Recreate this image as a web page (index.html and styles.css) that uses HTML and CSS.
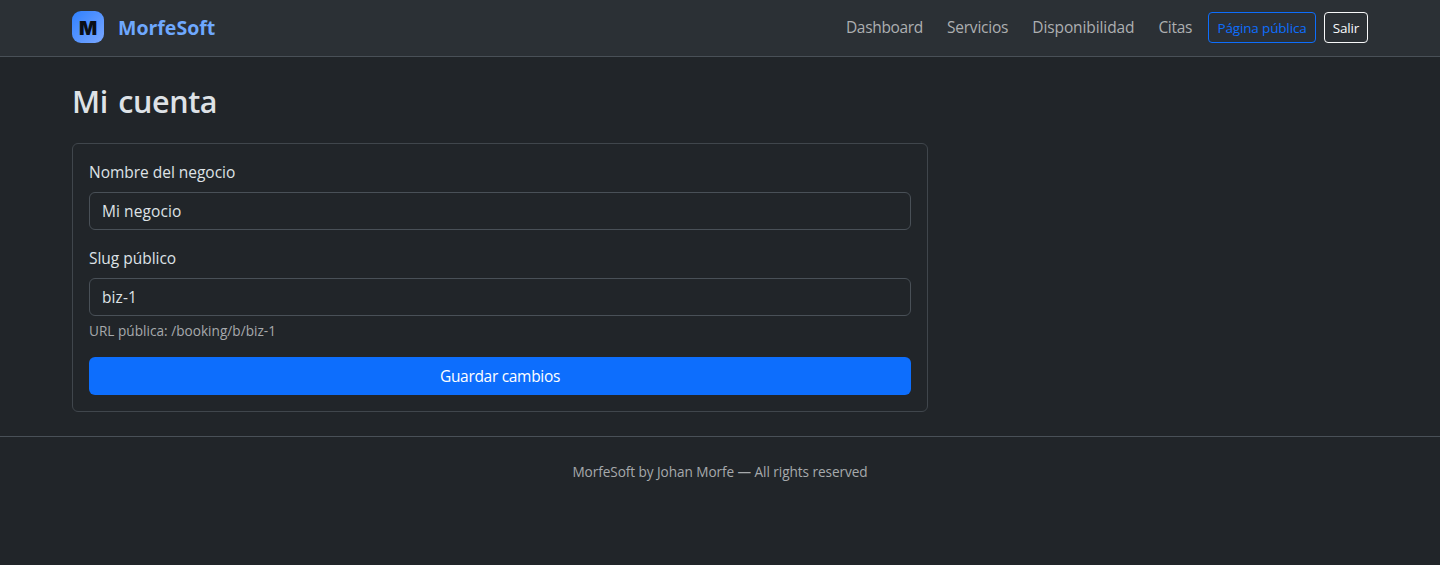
FILE: index.html
```html
<!DOCTYPE html>
<html lang="es">
<head>
<meta charset="utf-8">
<title>Mi cuenta</title>
<link rel="stylesheet" href="styles.css">
</head>
<body>
<header class="navbar">
  <div class="container navbar-inner">
    <a class="brand" href="#">
      <svg class="logo" width="32" height="32" viewBox="0 0 32 32">
        <defs><linearGradient id="g" x1="0" y1="0" x2="1" y2="1"><stop offset="0" stop-color="#2f80ff"/><stop offset="1" stop-color="#7aa7ff"/></linearGradient></defs>
        <rect width="32" height="32" rx="9" fill="url(#g)"/>
        <text class="logo-letter" x="16" y="24" text-anchor="middle">M</text>
      </svg>
      <span class="brand-name">MorfeSoft</span>
    </a>
    <nav class="nav">
      <a class="nav-link" href="#">Dashboard</a>
      <a class="nav-link nav-link-services" href="#">Servicios</a>
      <a class="nav-link nav-link-availability" href="#">Disponibilidad</a>
      <a class="nav-link" href="#">Citas</a>
      <a class="btn-sm btn-public" href="#">Página pública</a>
      <a class="btn-sm btn-exit" href="#">Salir</a>
    </nav>
  </div>
</header>
<main class="container main">
  <h1 class="title">Mi cuenta</h1>
  <form class="card">
    <label class="label" for="name">Nombre del negocio</label>
    <input class="input" id="name" value="Mi negocio">
    <label class="label label-next" for="slug">Slug público</label>
    <input class="input" id="slug" value="biz-1">
    <div class="help">URL pública: /booking/b/biz-1</div>
    <button class="submit" type="button">Guardar cambios</button>
  </form>
</main>
<footer class="footer">MorfeSoft by Johan Morfe — All rights reserved</footer>
</body>
</html>
```
FILE: styles.css
```css
* { box-sizing: border-box; }
body {
  margin: 0;
  background: #212529;
  color: #dee2e6;
  font: 15.5px/24px "Open Sans", "Noto Sans", sans-serif;
}
a { text-decoration: none; color: inherit; }
.container { width: 1296px; margin: 0 auto; }
.navbar { height: 57px; background: #2b3035; border-bottom: 1px solid #495057; }
.navbar-inner { display: flex; justify-content: space-between; align-items: center; height: 55px; }
.brand { display: flex; align-items: center; gap: 14px; height: 32px; margin-bottom: 1px; }
.logo { display: block; }
.logo-letter { font: 900 19px Inter, sans-serif; fill: #0b0f17; }
.brand-name { padding-top: 2px; font-size: 19.5px; font-weight: 700; line-height: 30px; color: #6ea8fe; letter-spacing: 0; }
.nav { display: flex; align-items: center; gap: 8px; }
.nav-link { margin-bottom: 2px; padding: 0 8px; color: #adafb1; letter-spacing: -0.33px; }
.nav-link-services { letter-spacing: -0.22px; }
.nav-link-availability { letter-spacing: -0.1px; }
.btn-sm { height: 31px; padding: 4px 8px; border: 1px solid; border-radius: 4px; font-size: 13.5px; line-height: 22px; letter-spacing: -0.15px; text-align: center; white-space: nowrap; }
.btn-public { width: 108px; padding: 4px 0; color: #0d6efd; }
.btn-exit { width: 44px; padding: 4px 0; color: #f8f9fa; }
.main { padding-top: 25px; }
.title { margin: 0 0 23px; font-size: 30.5px; line-height: 38px; font-weight: 600; letter-spacing: -0.4px; word-spacing: 3px; }
.card { width: 856px; height: 269px; padding: 16px; border: 1px solid #40464c; border-radius: 6px; }
.label { display: block; margin-bottom: 8px; letter-spacing: -0.02px; }
.label-next { margin-top: 16px; }
.input { display: block; width: 100%; height: 38px; padding: 6px 12px; border: 1px solid #495057; border-radius: 6px; background: #212529; color: #dee2e6; font: inherit; letter-spacing: 0.08px; }
.help { margin-top: 5px; font-size: 13.6px; line-height: 20px; color: #a6a9ac; letter-spacing: 0.02px; }
.submit { display: block; width: 100%; height: 38px; margin-top: 16px; padding: 0; border: 0; border-radius: 6px; background: #0d6efd; color: #fff; font: inherit; letter-spacing: -0.3px; }
.footer { margin-top: 24px; padding-top: 24px; border-top: 1px solid #495057; text-align: center; font-size: 13.6px; line-height: 22px; color: #a6a9ac; letter-spacing: -0.06px; }
```
